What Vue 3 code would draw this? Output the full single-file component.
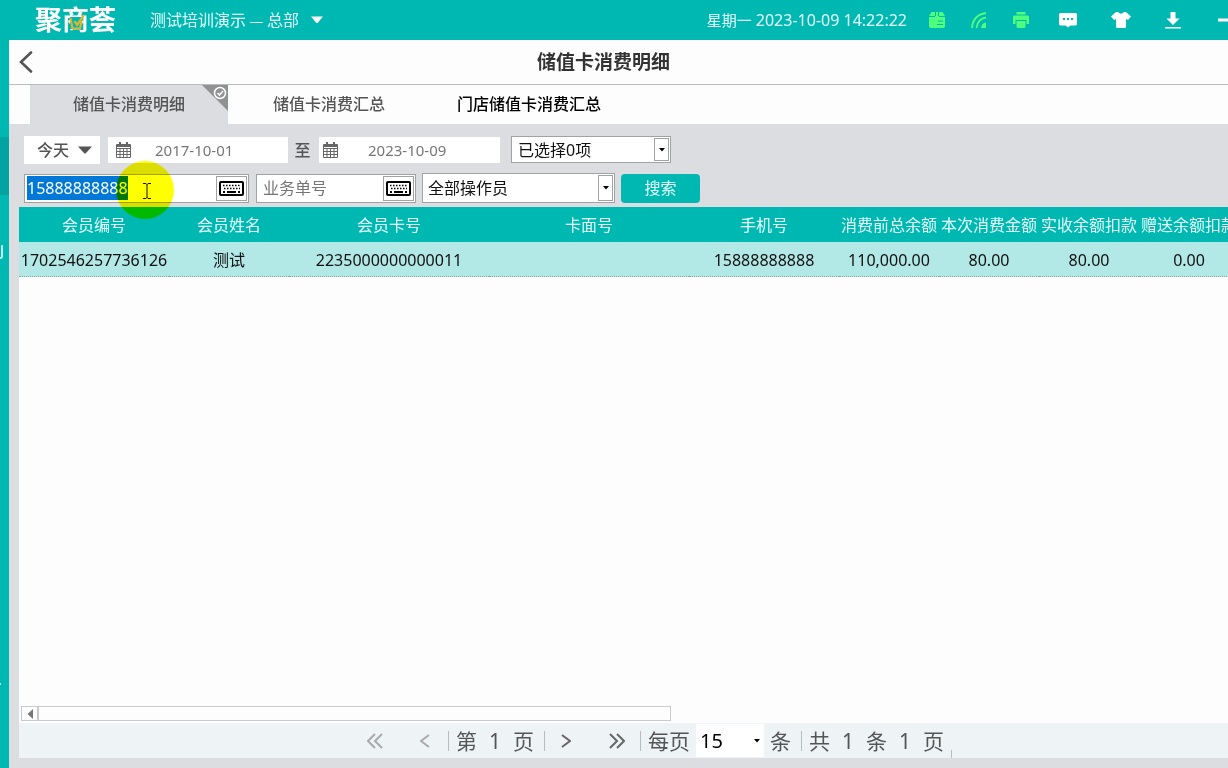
<script setup>
import { onMounted, ref } from 'vue'

const memberQuery = ref('15888888888')
const orderNo = ref('')
const startDate = ref('2017-10-01')
const endDate = ref('2023-10-09')
const memberInput = ref(null)

const columns = [
  { title: '会员编号', width: 150 },
  { title: '会员姓名', width: 120 },
  { title: '会员卡号', width: 200 },
  { title: '卡面号', width: 200 },
  { title: '手机号', width: 150 },
  { title: '消费前总余额', width: 100 },
  { title: '本次消费金额', width: 100 },
  { title: '实收余额扣款', width: 100 },
  { title: '赠送余额扣款', width: 100 }
]
const rows = [
  ['1702546257736126', '测试', '2235000000000011', '', '15888888888', '110,000.00', '80.00', '80.00', '0.00']
]

onMounted(() => {
  memberInput.value.focus({ preventScroll: true })
  memberInput.value.select()
})
</script>

<template>
  <div class="app">
    <header class="topbar">
      <div class="logo">
        聚商荟
        <svg class="logo-mark" width="18" height="18" viewBox="0 0 18 18" fill="none">
          <path d="M2 3 H14 V15 H2 Z" fill="#00b8b2" />
          <path d="M2.500 4 L4.500 14.500 H12 L13.500 7 M6.500 7 L9 11 L16 1" stroke="#e0b52c" stroke-width="2.200" />
        </svg>
      </div>
      <button class="store" type="button">
        测试培训演示<span class="dash">—</span>总部
        <svg width="14" height="8" viewBox="0 0 14 8"><path d="M1 0.5 H13 L8 6.5 Q7 7.5 6 6.5 Z" fill="#fff" /></svg>
      </button>
      <div class="status">
        <div class="clock"><span class="weekday">星期一</span> 2023-10-09 14:22:22</div>
        <div class="devices">
          <svg width="16" height="16" viewBox="0 0 16 16">
            <path d="M2.500 0 H13.500 L16 4 V14 Q16 16 14 16 H2 Q0 16 0 14 V4 Z" fill="#4dff7c" />
            <path d="M6.500 0 V4 M9.500 0 V4 M9 9 H14 M8 12.500 H14 M0 4.500 H6 M10 4.500 H16" stroke="#00b8b2" stroke-width="1" />
          </svg>
          <svg width="16" height="16" viewBox="0 0 16 16" fill="none" stroke="#4dff7c" stroke-width="1.8">
            <path d="M1 16 Q2 3 15 1 M5.5 16 Q6.5 7 15 5.5" />
            <path d="M10 16 Q10.500 11 15 10.500 V16 Z" fill="#4dff7c" stroke="none" />
          </svg>
          <svg width="16" height="16" viewBox="0 0 16 16" fill="#4dff7c">
            <path d="M3.500 0 H12.500 V2.500 H3.500 Z M1.500 3.500 H14.500 Q16 3.500 16 5 V12 H13.500 V8 H2.500 V12 H0 V5 Q0 3.500 1.500 3.500 Z M3.500 9 H12.500 V14.500 Q12.500 16 11 16 H5 Q3.500 16 3.500 14.500 Z" />
          </svg>
        </div>
        <nav class="actions">
          <button type="button" aria-label="消息">
            <svg width="18" height="16" viewBox="0 0 18 16">
              <path d="M1.500 1 H16.500 Q18 1 18 2.500 V12 Q18 13.500 16.500 13.500 H11.500 L9 15.500 L6.500 13.500 H1.500 Q0 13.500 0 12 V2.500 Q0 1 1.500 1 Z" fill="#fff" />
              <path d="M4 6 H6 V8 H4 Z M8 6 H10 V8 H8 Z M12 6 H14 V8 H12 Z" fill="#00b8b2" />
            </svg>
          </button>
          <button type="button" aria-label="皮肤">
            <svg width="20" height="16" viewBox="0 0 20 16">
              <path d="M5 0 H7 Q10 3.500 13 0 H15 L20 4.500 L17 8 L15 7 V14.500 Q15 16 13.500 16 H6.500 Q5 16 5 14.500 V7 L3 8 L0 4.500 Z" fill="#fff" />
            </svg>
          </button>
          <button type="button" aria-label="下载">
            <svg width="16" height="17" viewBox="0 0 16 17" fill="#fff">
              <path d="M5.500 0 H10.500 V6.500 H14.500 L8 13 L1.500 6.500 H5.500 Z M0 15 H16 V16.500 H0 Z" />
            </svg>
          </button>
          <button type="button" aria-label="最小化">
            <svg width="13" height="16" viewBox="0 0 13 16"><path d="M3 6.500 H13 V9.500 H3 Z" fill="#fff" /></svg>
          </button>
        </nav>
      </div>
    </header>

    <div class="body">
      <aside class="rail">
        <span class="rail-active"></span>
        <span class="rail-edge"></span>
        <span class="rail-dot"></span>
      </aside>

      <main class="main">
        <div class="titlebar">
          <button class="back" type="button" aria-label="返回">
            <svg width="14" height="22" viewBox="0 0 14 22" fill="none" stroke="#555" stroke-width="2.600" stroke-linecap="round"><path d="M12 1.500 L2 11 L12 20.500" /></svg>
          </button>
          <h1>储值卡消费明细</h1>
        </div>

        <nav class="tabs">
          <button class="tab active" type="button">
            储值卡消费明细
            <svg class="corner" width="26" height="26" viewBox="0 0 26 26">
              <path d="M0 0 H26 V26 Z" fill="#8f9193" />
              <circle cx="18" cy="8" r="5.500" fill="none" stroke="#fff" stroke-width="1.500" />
              <path d="M15.500 8 L17.500 10 L21 6" fill="none" stroke="#fff" stroke-width="1.600" />
            </svg>
          </button>
          <button class="tab" type="button">储值卡消费汇总</button>
          <button class="tab dark" type="button">门店储值卡消费汇总</button>
        </nav>

        <form class="filters" @submit.prevent>
          <div class="line">
            <div class="period">
              <select aria-label="时间范围"><option>今天</option></select>
              <svg width="14" height="8" viewBox="0 0 14 8"><path d="M0 0.500 H14 L8 7 Q7 8 6 7 Z" fill="#555" /></svg>
            </div>
            <label class="date">
              <svg width="15" height="16" viewBox="0 0 15 16" fill="none" stroke="#666">
                <path d="M0.500 2.500 H14.500 V15.500 H0.500 Z M0.500 6.500 H14.500 M0.500 9.500 H14.500 M0.500 12.500 H14.500 M4 6 V15 M7.500 6 V15 M11 6 V15" />
                <path d="M1 4 H14" stroke-width="2" /><path d="M4 0 V4 M11 0 V4" stroke-width="2" />
              </svg>
              <input v-model="startDate" type="text" aria-label="开始日期">
            </label>
            <span class="to">至</span>
            <label class="date end">
              <svg width="15" height="16" viewBox="0 0 15 16" fill="none" stroke="#666">
                <path d="M0.500 2.500 H14.500 V15.500 H0.500 Z M0.500 6.500 H14.500 M0.500 9.500 H14.500 M0.500 12.500 H14.500 M4 6 V15 M7.500 6 V15 M11 6 V15" />
                <path d="M1 4 H14" stroke-width="2" /><path d="M4 0 V4 M11 0 V4" stroke-width="2" />
              </svg>
              <input v-model="endDate" type="text" aria-label="结束日期">
            </label>
            <div class="combo items">
              <select aria-label="项目"><option>已选择0项</option></select>
              <span class="drop"><svg width="6" height="4" viewBox="0 0 6 4"><path d="M0 0 H6 L3 3.500 Z" /></svg></span>
            </div>
          </div>

          <div class="line second">
            <div class="field member">
              <input ref="memberInput" v-model="memberQuery" type="text" aria-label="会员">
              <button class="keys" type="button" aria-label="键盘">
                <svg width="25" height="15" viewBox="0 0 25 15" fill="none" stroke="#000"><rect x="1" y="1" width="23" height="13" rx="1" stroke-width="2" /><path d="M4 4.500 H21 M5 7.500 H21" stroke-width="1.500" stroke-dasharray="1.500 1.500" /><path d="M4 11 H6 M8 11 H17 M19 11 H21" stroke-width="2" /></svg>
              </button>
            </div>
            <div class="field order">
              <input v-model="orderNo" type="text" placeholder="业务单号" aria-label="业务单号">
              <button class="keys" type="button" aria-label="键盘">
                <svg width="25" height="15" viewBox="0 0 25 15" fill="none" stroke="#000"><rect x="1" y="1" width="23" height="13" rx="1" stroke-width="2" /><path d="M4 4.500 H21 M5 7.500 H21" stroke-width="1.500" stroke-dasharray="1.500 1.500" /><path d="M4 11 H6 M8 11 H17 M19 11 H21" stroke-width="2" /></svg>
              </button>
            </div>
            <div class="combo operator">
              <select aria-label="操作员"><option>全部操作员</option></select>
              <span class="drop"><svg width="6" height="4" viewBox="0 0 6 4"><path d="M0 0 H6 L3 3.500 Z" /></svg></span>
            </div>
            <button class="search" type="submit">搜索</button>
          </div>
          <svg class="pointer" width="58" height="58" viewBox="0 0 58 58">
            <circle cx="29" cy="29" r="29" fill="#ff0" />
            <path d="M27 22.500 H30 L31 23.500 L32 22.500 H35 M31 23 V37 M27 37.500 H30 L31 36.500 L32 37.500 H35" fill="none" stroke="#111" />
          </svg>
        </form>

        <section class="grid">
          <table>
            <colgroup><col v-for="c in columns" :key="c.title" :style="{ width: c.width + 'px' }"></colgroup>
            <thead>
              <tr><th v-for="c in columns" :key="c.title" scope="col">{{ c.title }}</th></tr>
            </thead>
            <tbody>
              <tr v-for="row in rows" :key="row[0]"><td v-for="(cell, i) in row" :key="i">{{ cell }}</td></tr>
            </tbody>
          </table>
          <div class="scroll">
            <button type="button" aria-label="向左滚动"><svg width="6" height="10" viewBox="0 0 6 10"><path d="M6 0 V10 L0.500 5 Z" fill="#777" /></svg></button>
          </div>
        </section>

        <footer class="pager">
          <button class="nav off" type="button" aria-label="首页"><svg width="16" height="16" viewBox="0 0 16 16"><path d="M8 1 L1 8 L8 15 M15 1 L8 8 L15 15" /></svg></button>
          <button class="nav off" type="button" aria-label="上一页"><svg width="10" height="14" viewBox="0 0 10 14"><path d="M9 1 L1 7 L9 13" /></svg></button>
          <div class="part page"><span>第</span><span>1</span><span>页</span></div>
          <div class="part moves">
            <button class="nav" type="button" aria-label="下一页"><svg width="10" height="14" viewBox="0 0 10 14"><path d="M1 1 L9 7 L1 13" /></svg></button>
            <button class="nav" type="button" aria-label="末页"><svg width="16" height="16" viewBox="0 0 16 16"><path d="M1 1 L8 8 L1 15 M8 1 L15 8 L8 15" /></svg></button>
          </div>
          <div class="part size">
            <label for="page-size">每页</label>
            <div class="size-box">
              <select id="page-size"><option>15</option></select>
              <svg width="6" height="4" viewBox="0 0 6 4"><path d="M0 0 H6 L3 3.500 Z" /></svg>
            </div>
            <span>条</span>
          </div>
          <div class="part total"><span>共</span><span>1</span><span>条</span><span>1</span><span>页</span></div>
          <span class="end-mark"></span>
        </footer>
      </main>
    </div>
  </div>
</template>

<style>
body {
  overflow: hidden;
}
</style>

<style scoped>
* {
  box-sizing: border-box;
}
.app {
  display: flex;
  flex-direction: column;
  height: 100vh;
  overflow: hidden;
  background: #00b8b2;
  color: #111;
  font: 16px/24px "Noto Sans", "Noto Sans CJK SC", sans-serif;
}
button,
input,
select {
  margin: 0;
  padding: 0;
  border: 0;
  border-radius: 0;
  outline: 0;
  background: none;
  color: inherit;
  font: inherit;
}
select {
  appearance: none;
}
svg {
  display: block;
  flex: none;
}
.topbar {
  display: flex;
  flex: none;
  align-items: center;
  height: 40px;
  padding-left: 35px;
  color: #e6ffff;
}
.logo {
  position: relative;
  color: #fff;
  font-size: 27px;
  font-weight: 700;
  line-height: 40px;
}
.logo-mark {
  position: absolute;
  top: 14px;
  left: 33px;
}
.store {
  display: flex;
  align-items: center;
  margin-left: 34px;
  font-size: 16px;
  line-height: 22px;
  white-space: nowrap;
}
.dash {
  width: 21px;
  text-align: center;
  font-family: "Noto Sans CJK SC", sans-serif;
}
.store svg {
  margin-left: 11px;
}
.status {
  display: flex;
  align-items: center;
  margin-left: auto;
}
.clock {
  white-space: nowrap;
}
.weekday {
  font-size: 15px;
}
.devices {
  display: flex;
  gap: 26px;
  margin: 0 30px 0 22px;
}
.actions {
  display: flex;
  align-items: center;
  gap: 34px;
}
.body {
  display: flex;
  flex: 1;
  min-height: 0;
}
.rail {
  display: flex;
  flex: none;
  flex-direction: column;
  width: 9px;
  padding-top: 97px;
}
.rail-active {
  height: 58px;
  background: #00a5a1;
}
.rail-edge {
  width: 3px;
  height: 14px;
  margin-top: 50px;
  border: solid #c4f4f1;
  border-width: 0 2px 2px 0;
  border-radius: 0 0 3px 0;
}
.rail-dot {
  width: 1px;
  height: 2px;
  margin-top: 424px;
  background: #c4f4f1;
}
.main {
  display: flex;
  flex: 1;
  flex-direction: column;
  min-width: 0;
  background: #dbdde1;
}
.titlebar {
  display: flex;
  flex: none;
  align-items: center;
  height: 45px;
  padding: 0 54px 0 10px;
  border-bottom: 1px solid #b9bbbd;
  background: #fdfdfd;
}
h1 {
  flex: 1;
  margin: 0;
  color: #333;
  font-size: 19px;
  line-height: 24px;
  text-align: center;
}
.tabs {
  display: flex;
  flex: none;
  height: 39px;
  padding-left: 21px;
  background: #fdfdfd;
}
.tab {
  position: relative;
  padding: 0 36px 2px;
  color: #555;
  font-weight: 500;
}
.tab.active {
  width: 198px;
  margin-right: 9px;
  background: #dbdde1;
}
.tab.dark {
  color: #000;
}
.corner {
  position: absolute;
  top: 0;
  right: 0;
}
.filters {
  position: relative;
  flex: none;
  padding: 12px 15px 4px;
}
.line {
  display: flex;
  align-items: center;
  height: 27px;
}
.second {
  height: 30px;
  margin-top: 10px;
}
.period {
  display: flex;
  align-items: center;
  width: 76px;
  height: 28px;
  margin-right: 8px;
  padding: 0 8px 0 13px;
  background: #fff;
  color: #555;
}
.period select {
  flex: 1;
  min-width: 0;
  font-weight: 500;
}
.date {
  display: flex;
  align-items: center;
  width: 180px;
  height: 26px;
  padding-left: 8px;
  background: #fff;
  color: #777;
  font-size: 15px;
}
.date.end {
  width: 181px;
  padding-left: 4px;
}
.date input {
  flex: 1;
  min-width: 0;
  padding-left: 24px;
}
.date.end input {
  padding-left: 30px;
}
.to {
  width: 31px;
  padding-right: 2px;
  color: #555;
  font-weight: 500;
  text-align: center;
}
.combo,
.field {
  display: flex;
  border: 1px solid #a0a2a4;
  background: #fff;
}
.combo select {
  flex: 1;
  min-width: 0;
  padding-left: 6px;
  color: #111;
}
.drop {
  display: flex;
  align-items: center;
  justify-content: center;
  width: 15px;
  margin: 1px;
  border: 1px solid #a0a2a4;
}
.items {
  width: 160px;
  height: 27px;
  margin-left: 11px;
}
.operator {
  width: 193px;
  height: 30px;
  margin: 0 6px;
}
.operator select {
  padding-left: 5px;
}
.field {
  height: 29px;
  padding: 1px;
}
.field input {
  flex: 1;
  min-width: 0;
  padding-left: 1px;
}
.field input::selection {
  background: #0078d7;
  color: #fff;
}
.field input::placeholder {
  color: #757575;
  opacity: 1;
}
.member {
  width: 225px;
  margin-right: 7px;
}
.order {
  width: 160px;
}
.order input {
  padding-left: 5px;
}
.keys {
  display: flex;
  align-items: center;
  justify-content: center;
  width: 31px;
  border: 1px solid #a0a2a4;
}
.search {
  width: 79px;
  height: 29px;
  border-radius: 4px;
  background: #00b8b2;
  color: #e6ffff;
}
.pointer {
  position: absolute;
  z-index: 2;
  top: 37px;
  left: 107px;
  mix-blend-mode: multiply;
  pointer-events: none;
}
.grid {
  display: flex;
  flex: 1;
  flex-direction: column;
  align-items: flex-start;
  min-height: 0;
  margin-left: 10px;
  overflow: hidden;
  background: #fdfdfd;
}
table {
  width: 1220px;
  border-spacing: 0;
  table-layout: fixed;
}
th,
td {
  height: 35px;
  padding: 0;
  text-align: center;
  white-space: nowrap;
}
th {
  background: #00b8b2;
  color: #e6ffff;
  font-weight: 400;
}
td {
  padding-top: 2px;
  border-bottom: 1px dotted #88a8a8;
  background: #b2e8e6;
}
.scroll {
  width: 650px;
  height: 15px;
  margin: auto 0 2px 2px;
  border: 1px solid #c8cacc;
}
.scroll button {
  display: flex;
  align-items: center;
  justify-content: center;
  width: 17px;
  height: 13px;
  border-right: 2px solid #c8cacc;
}
.pager {
  display: flex;
  flex: none;
  align-items: center;
  height: 35px;
  margin: 0 0 10px 10px;
  padding-left: 348px;
  background: #eef3f6;
  color: #555;
  font-size: 21px;
}
.nav svg {
  fill: none;
  stroke: #666;
  stroke-width: 2;
}
.nav.off svg {
  stroke: #aaa;
}
.nav.off + .nav.off {
  margin: 0 18px 0 37px;
}
.part {
  display: flex;
  align-items: center;
  height: 20px;
  border-left: 1px solid #bbb;
}
.page,
.total {
  gap: 12px;
  padding: 0 10px 0 7px;
}
.moves {
  gap: 38px;
  padding: 0 15px 0 16px;
}
.size {
  gap: 6px;
  padding: 0 10px 0 7px;
}
.size-box {
  display: flex;
  align-items: center;
  width: 68px;
  height: 33px;
  padding: 0 4px;
  background: #fff;
  color: #000;
  font-size: 20px;
}
.size-box select {
  flex: 1;
  min-width: 0;
}
.total {
  padding-right: 7px;
}
.end-mark {
  align-self: flex-end;
  width: 1px;
  height: 8px;
  background: #bbb;
}
</style>
